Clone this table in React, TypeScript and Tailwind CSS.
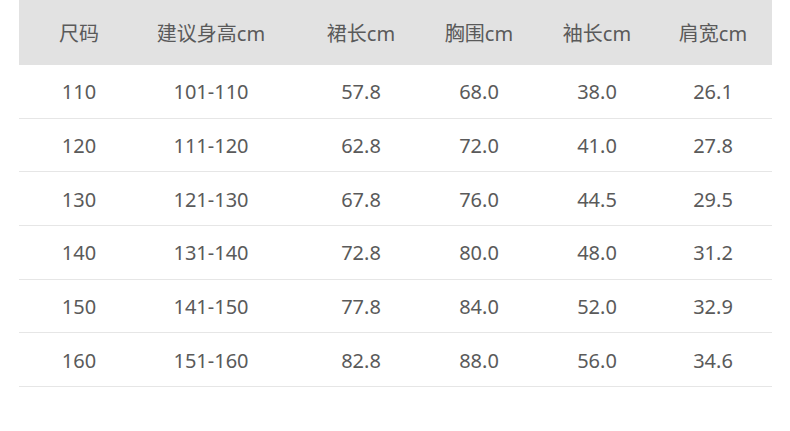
import React from "react";

const headers = ["尺码", "建议身高cm", "裙长cm", "胸围cm", "袖长cm", "肩宽cm"];
const rows = [
  ["110", "101-110", "57.8", "68.0", "38.0", "26.1"],
  ["120", "111-120", "62.8", "72.0", "41.0", "27.8"],
  ["130", "121-130", "67.8", "76.0", "44.5", "29.5"],
  ["140", "131-140", "72.8", "80.0", "48.0", "31.2"],
  ["150", "141-150", "77.8", "84.0", "52.0", "32.9"],
  ["160", "151-160", "82.8", "88.0", "56.0", "34.6"],
];

const cols = "grid grid-cols-[120px_144px_156px_80px_156px_76px] pr-[21px]";

export default function App() {
  return (
    <div
      className="w-[790px] h-[431px] bg-white overflow-hidden"
      style={{ fontFamily: '"Noto Sans", "Noto Sans CJK SC", sans-serif' }}
    >
      <div className="ml-[19px] w-[753px] text-[20px] text-[#5a5a5a]">
        <div className={`${cols} h-[65px] items-center bg-[#e2e2e2] pt-[2px]`}>
          {headers.map((h) => (
            <div key={h} className="text-center">
              {h}
            </div>
          ))}
        </div>
        {rows.map((r, i) => (
          <div
            key={i}
            className={`${cols} h-[53.67px] items-center border-b border-[#e6e6e6] pt-[2px]`}
          >
            {r.map((c, j) => (
              <div key={j} className="text-center">
                {c}
              </div>
            ))}
          </div>
        ))}
      </div>
    </div>
  );
}
